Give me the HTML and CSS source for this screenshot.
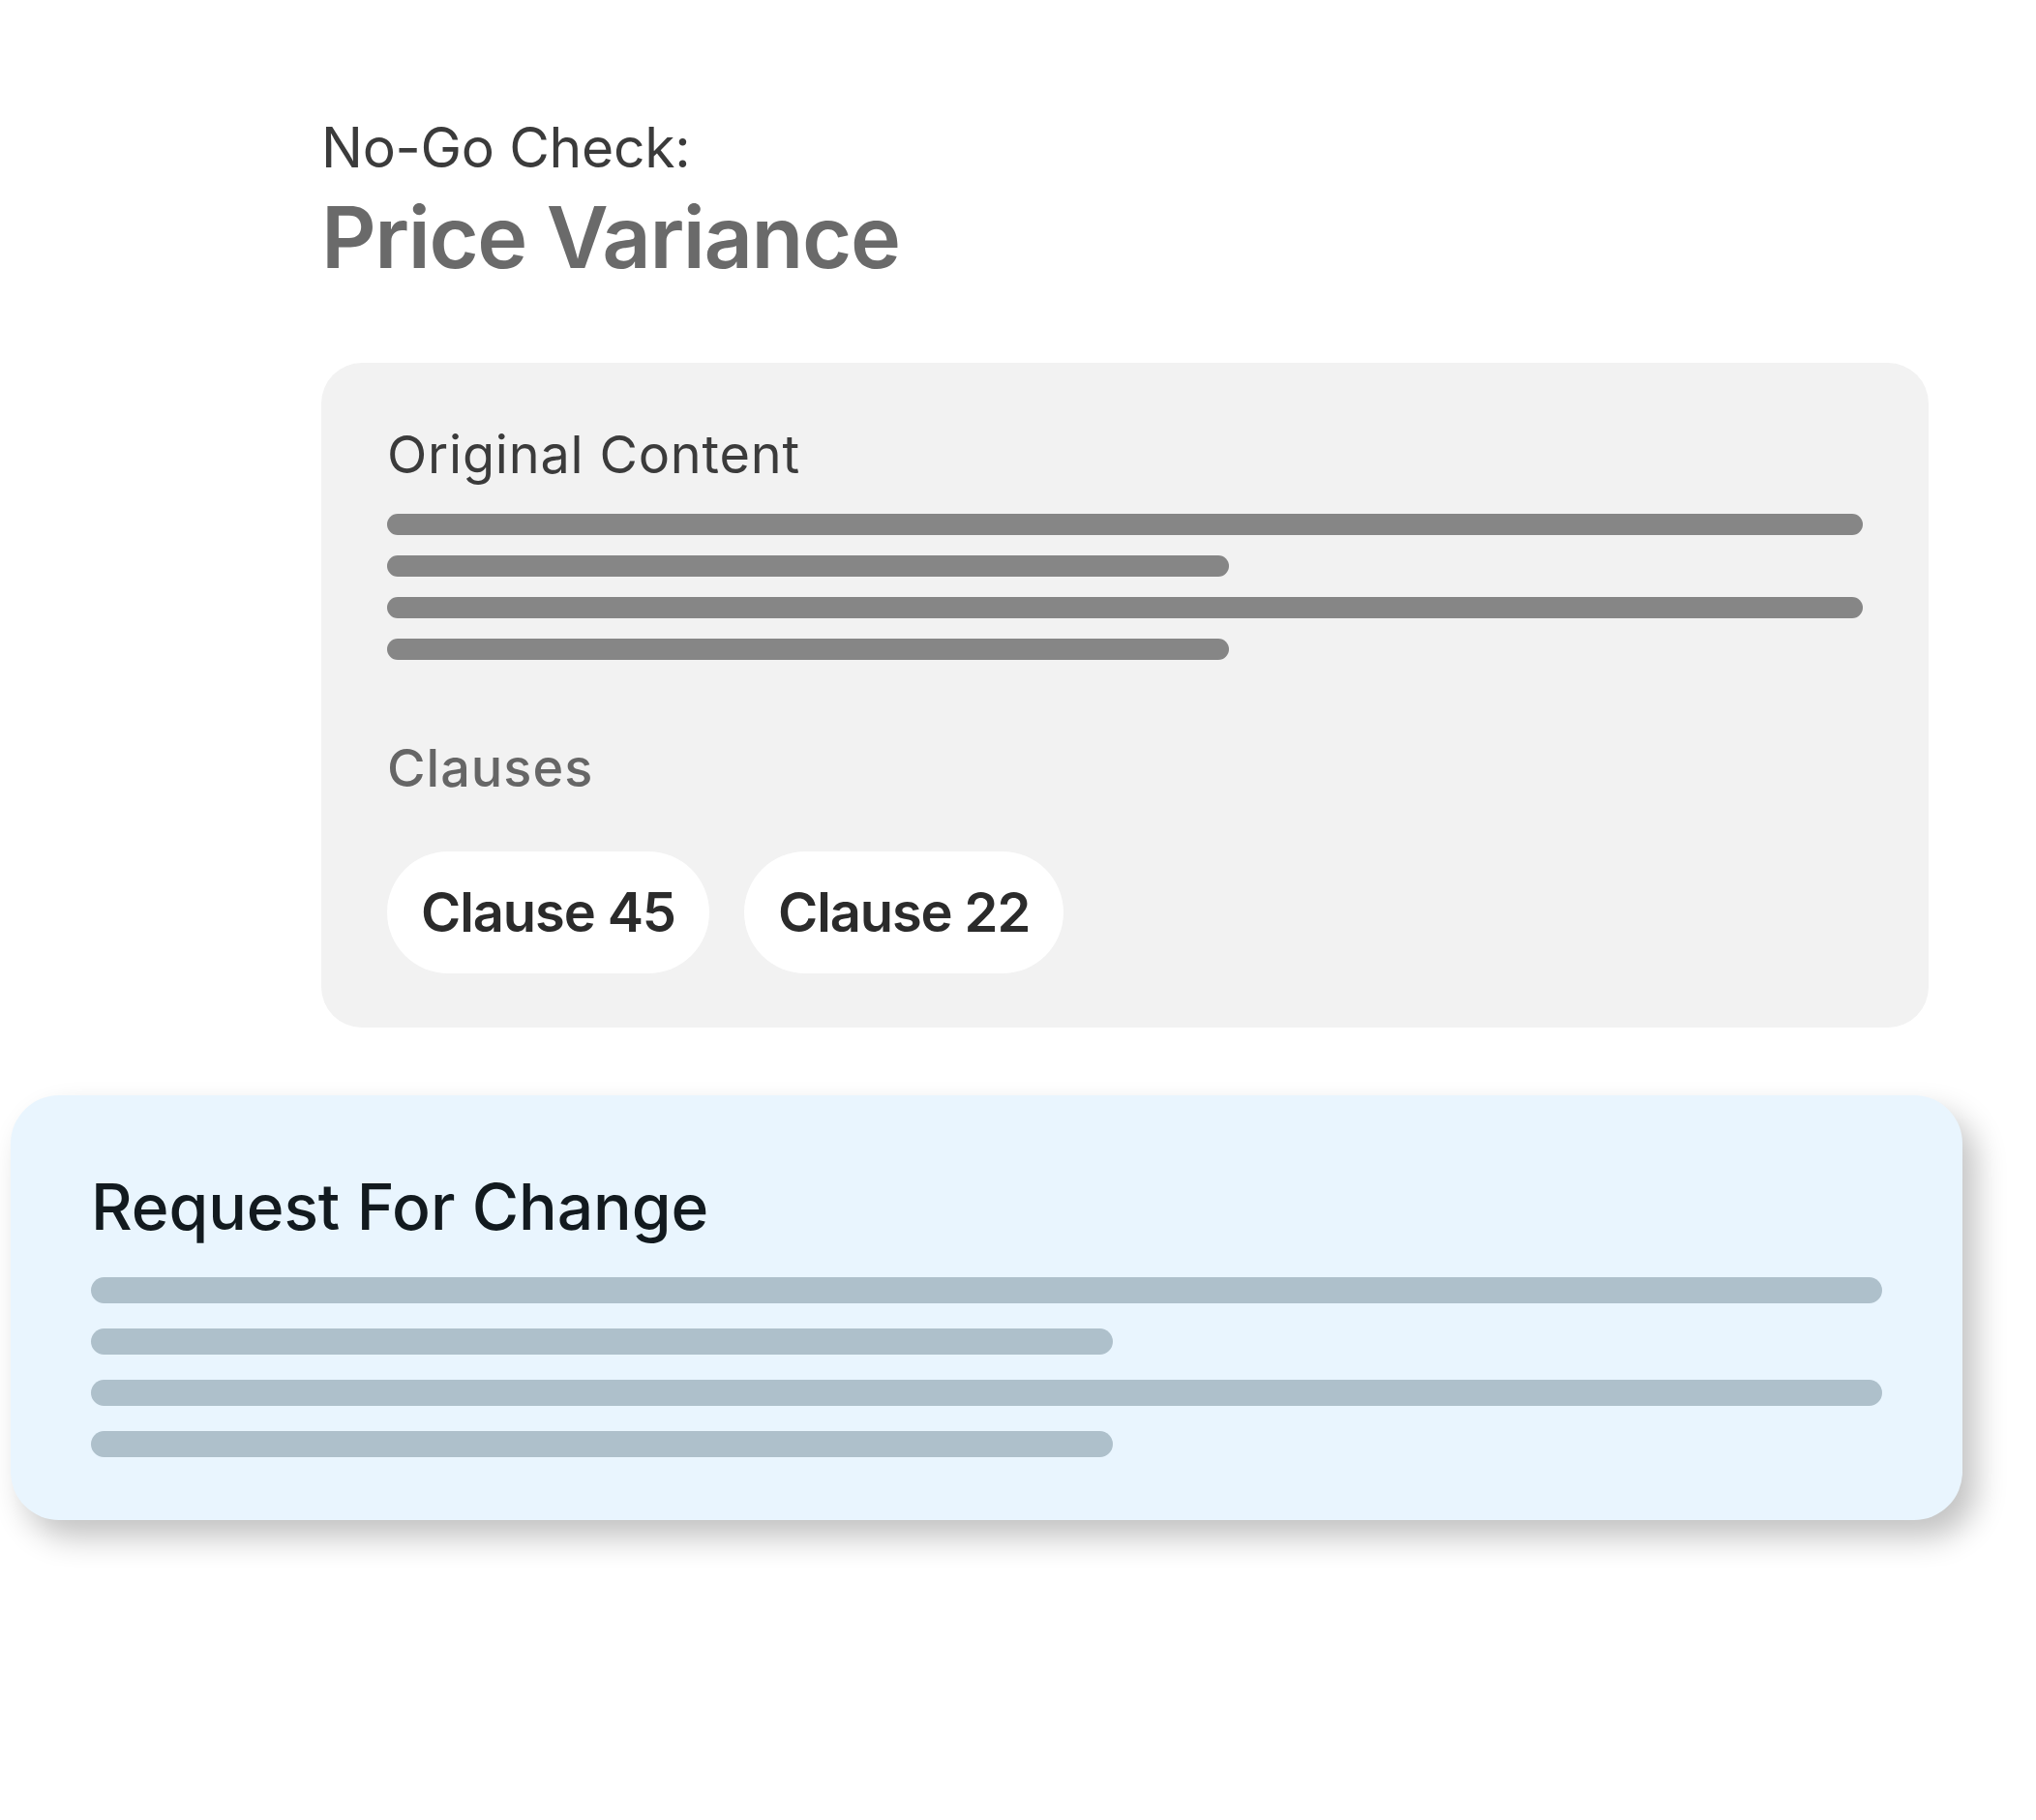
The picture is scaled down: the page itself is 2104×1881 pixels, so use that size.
FILE: index.html
```html
<!DOCTYPE html>
<html lang="en">
<head>
<meta charset="utf-8">
<title>No-Go Check: Price Variance</title>
<link rel="stylesheet" href="styles.css">
</head>
<body>
<main class="page">
  <header class="head">
    <div class="kicker">No-Go Check:</div>
    <h1 class="title">Price Variance</h1>
  </header>

  <section class="card-original">
    <h2 class="section-title">Original Content</h2>
    <div class="lines lines-gray">
      <div class="line full"></div>
      <div class="line half"></div>
      <div class="line full"></div>
      <div class="line half"></div>
    </div>
    <h3 class="clauses-title">Clauses</h3>
    <div class="pills">
      <span class="pill">Clause 45</span>
      <span class="pill">Clause 22</span>
    </div>
  </section>

  <section class="card-request">
    <h2 class="request-title">Request For Change</h2>
    <div class="lines lines-blue">
      <div class="line full"></div>
      <div class="line half"></div>
      <div class="line full"></div>
      <div class="line half"></div>
    </div>
  </section>
</main>
</body>
</html>
```

FILE: styles.css
```css
* { box-sizing: border-box; }

html, body {
  margin: 0;
  padding: 0;
  background: #ffffff;
}

body {
  font-family: "Inter", "Noto Sans", "Liberation Sans", sans-serif;
  width: 2104px;
  min-height: 1881px;
}

.page {
  display: flex;
  flex-direction: column;
  align-items: flex-start;
  padding-top: 124px;
}

.head {
  margin-left: 332px;
  display: flex;
  flex-direction: column;
  gap: 20px;
}

.kicker {
  font-size: 57px;
  line-height: 57px;
  font-weight: 400;
  color: #3b3b3b;
  letter-spacing: -0.3px;
}

.title {
  margin: 0;
  font-size: 88px;
  line-height: 88px;
  font-weight: 600;
  color: #6a6a6a;
  letter-spacing: -1.4px;
}

.card-original {
  margin-top: 86px;
  margin-left: 332px;
  width: 1661px;
  height: 687px;
  background: #f2f2f2;
  border-radius: 42px;
  padding: 68px 68px 0 68px;
  display: flex;
  flex-direction: column;
}

.section-title {
  margin: 0;
  font-size: 54px;
  line-height: 54px;
  font-weight: 400;
  color: #3b3b3b;
  letter-spacing: 0.8px;
}

.lines {
  display: flex;
  flex-direction: column;
}

.lines-gray {
  margin-top: 34px;
  gap: 21px;
}

.lines-gray .line {
  height: 22px;
  border-radius: 11px;
  background: #868686;
}

.lines-gray .half { width: 870px; }

.clauses-title {
  margin: 85px 0 0 0;
  font-size: 54px;
  line-height: 54px;
  font-weight: 500;
  color: #666666;
  letter-spacing: 1px;
}

.pills {
  margin-top: 59px;
  display: flex;
  gap: 36px;
}

.pill {
  height: 126px;
  padding: 0 35px;
  border-radius: 63px;
  background: #ffffff;
  display: flex;
  align-items: center;
  font-size: 56px;
  font-weight: 600;
  color: #2b2b2b;
  letter-spacing: -1.1px;
}

.card-request {
  margin-top: 70px;
  margin-left: 11px;
  width: 2017px;
  height: 439px;
  background: #e9f5fe;
  border-radius: 50px;
  padding: 82px 83px 0 83px;
  box-shadow: 14px 18px 32px rgba(0, 0, 0, 0.24);
  display: flex;
  flex-direction: column;
}

.request-title {
  margin: 0;
  font-size: 66px;
  line-height: 66px;
  font-weight: 500;
  color: #121a1f;
  letter-spacing: -0.1px;
}

.lines-blue {
  margin-top: 40px;
  gap: 26px;
}

.lines-blue .line {
  height: 27px;
  border-radius: 14px;
  background: #aec0cb;
}

.lines-blue .half { width: 1056px; }
```
